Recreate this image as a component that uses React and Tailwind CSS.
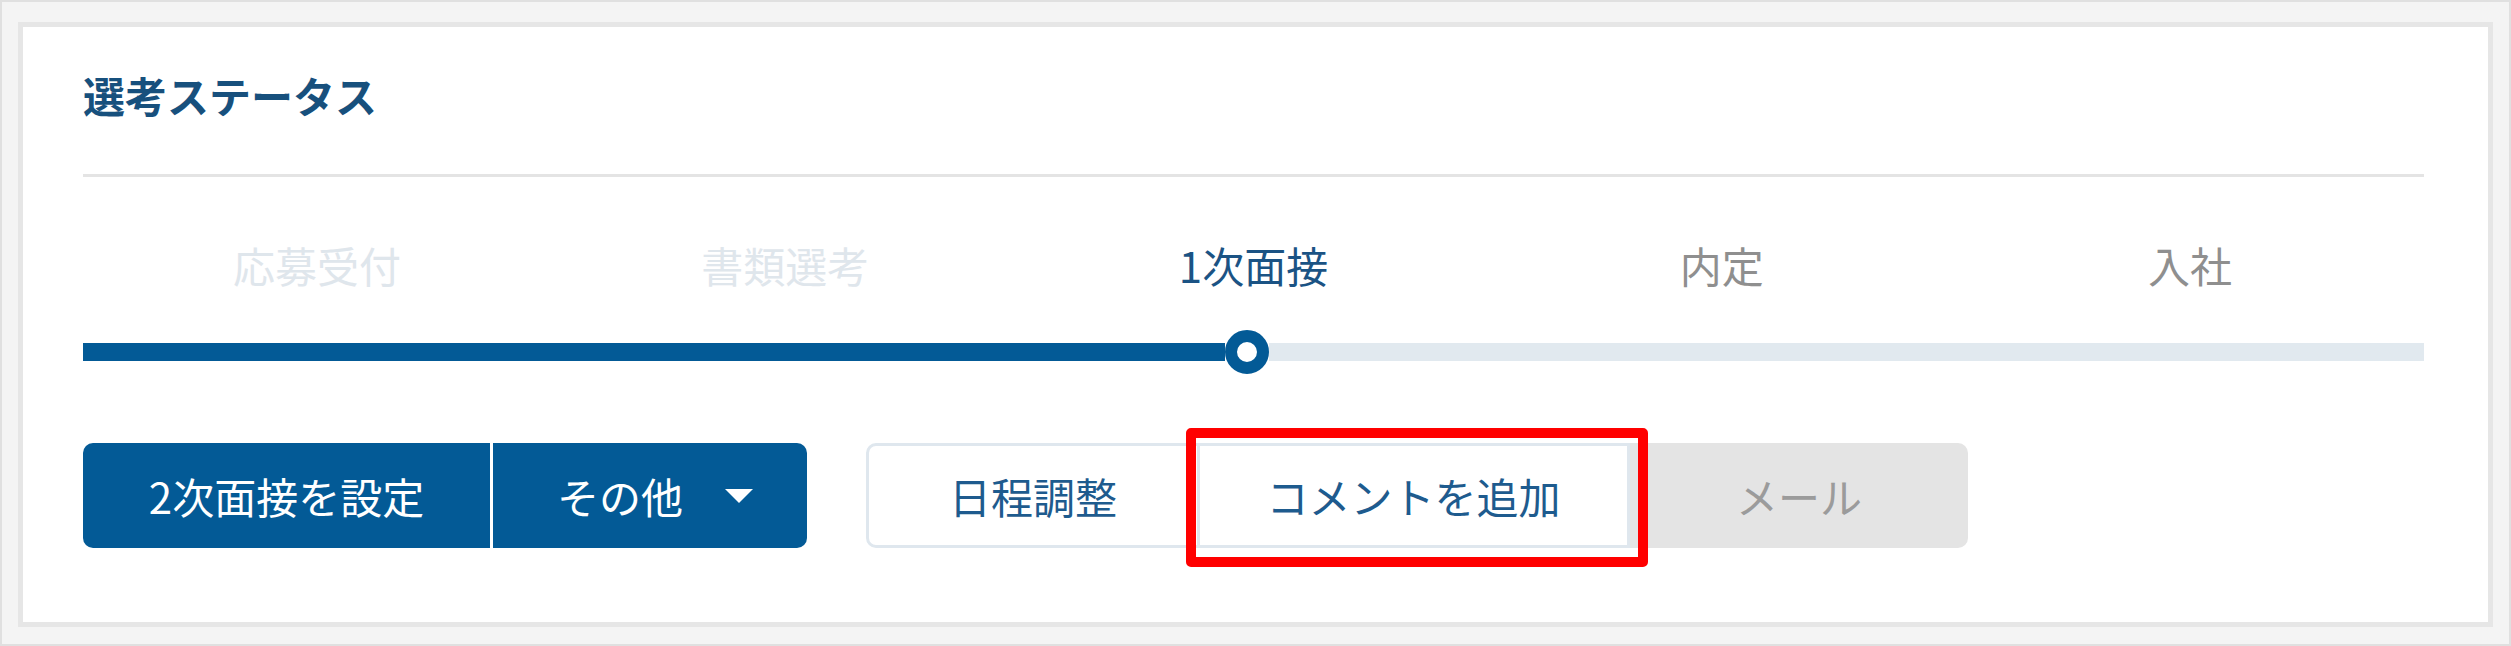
import React from "react";

const steps = [
  { label: "応募受付", cls: "text-[#dfe6ec]" },
  { label: "書類選考", cls: "text-[#dfe6ec]" },
  { label: "1次面接", cls: "text-[#1b5384]" },
  { label: "内定", cls: "text-[#8f8f8f]" },
  { label: "入社", cls: "text-[#8f8f8f]" },
];

export default function App() {
  return (
    <div className="w-[2511px] h-[646px] border-2 border-[#e0e0e0] bg-[#f4f4f4] pt-[20px] pl-[16px] pr-[16px] pb-[17px] font-['Noto_Sans_CJK_JP','Noto_Sans',sans-serif]">
      <div className="h-full border-[5px] border-[#e6e6e6] bg-white pl-[60px] pr-[64px]">
        {/* Title */}
        <div className="pt-[38px] pb-[49px] border-b-[3px] border-[#e4e4e4]">
          <h2 className="text-[42px] leading-[60px] font-bold text-[#17507d]">選考ステータス</h2>
        </div>

        {/* Steps */}
        <div className="mt-[58px] grid grid-cols-5">
          {steps.map((s) => (
            <div key={s.label} className={`text-center text-[42px] leading-[60px] ${s.cls}`}>
              {s.label}
            </div>
          ))}
        </div>

        {/* Progress bar */}
        <div className="mt-[35px] flex items-center h-[44px]">
          <div className="w-[1142px] h-[18px] bg-[#035a96]" />
          <div className="w-[44px] h-[44px] rounded-full border-[12px] border-[#035a96] bg-white shrink-0" />
          <div className="flex-1 h-[18px] bg-[#e1e9ef]" />
        </div>

        {/* Buttons */}
        <div className="mt-[69px] flex items-center">
          <div className="flex h-[105px] rounded-[10px] overflow-hidden">
            <button className="w-[407px] h-full bg-[#035a96] text-white text-[42px] leading-none flex items-center justify-center">
              2次面接を設定
            </button>
            <button className="w-[317px] h-full bg-[#035a96] border-l-[3px] border-white text-white text-[42px] leading-none flex items-center justify-center gap-[42px] pl-[10px]">
              <span>その他</span>
              <svg width="28" height="14" viewBox="0 0 28 14">
                <polygon points="0,0 28,0 14,14" fill="white" />
              </svg>
            </button>
          </div>

          <div className="ml-[59px] flex h-[105px]">
            <button className="w-[334px] h-full border-[3px] border-[#dfe7ee] rounded-l-[10px] bg-white text-[#1e5b8e] text-[42px] leading-none flex items-center justify-center">
              日程調整
            </button>
            <div className="relative">
              <button className="w-[430px] h-[105px] border-y-[3px] border-r-[3px] border-[#dfe7ee] bg-white text-[#1e5b8e] text-[42px] leading-none flex items-center justify-center">
                コメントを追加
              </button>
              <div className="absolute left-[-14px] right-[-18px] top-[-15px] bottom-[-19px] border-[10px] border-[#ff0000] rounded-[5px] pointer-events-none" />
            </div>
            <button className="w-[338px] h-full bg-[#e4e4e4] rounded-r-[10px] text-[#9b9b9b] text-[42px] leading-none flex items-center justify-center">
              メール
            </button>
          </div>
        </div>
      </div>
    </div>
  );
}
